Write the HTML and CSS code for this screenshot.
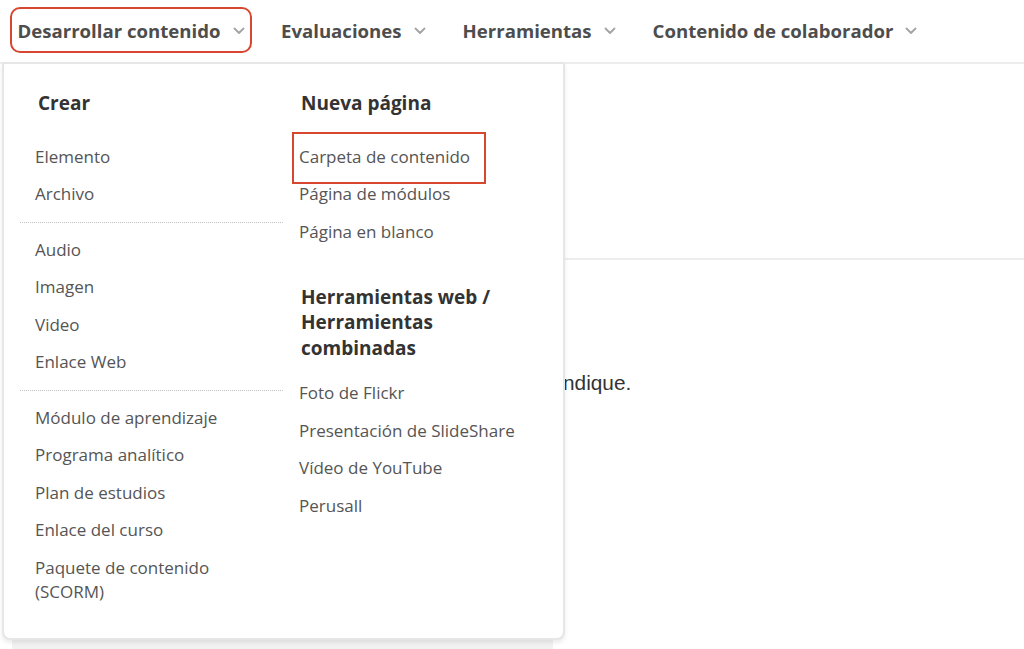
FILE: index.html
```html
<!DOCTYPE html>
<html lang="es">
<head>
  <meta charset="UTF-8"/>
  <meta name="viewport" content="width=device-width, initial-scale=1"/>
  <title>Desarrollar contenido</title>
  <link rel="stylesheet" href="styles.css">
</head>
<body>

  <!-- Top menu -->
  <header class="topnav">
    <div class="nav-item is-open">Desarrollar contenido
      <svg class="chev" viewBox="0 0 12 8"><path d="M1.5 1.5l4.5 4.5 4.5-4.5"/></svg>
    </div>
    <div class="nav-item">Evaluaciones
      <svg class="chev" viewBox="0 0 12 8"><path d="M1.5 1.5l4.5 4.5 4.5-4.5"/></svg>
    </div>
    <div class="nav-item">Herramientas
      <svg class="chev" viewBox="0 0 12 8"><path d="M1.5 1.5l4.5 4.5 4.5-4.5"/></svg>
    </div>
    <div class="nav-item">Contenido de colaborador
      <svg class="chev" viewBox="0 0 12 8"><path d="M1.5 1.5l4.5 4.5 4.5-4.5"/></svg>
    </div>
  </header>

  <!-- Open dropdown -->
  <div class="dropdown">
    <div class="dd-col dd-create">
      <h3>Crear</h3>
      <ul>
        <li>Elemento</li>
        <li>Archivo</li>
      </ul>
      <hr class="dd-sep">
      <ul>
        <li>Audio</li>
        <li>Imagen</li>
        <li>Video</li>
        <li>Enlace Web</li>
      </ul>
      <hr class="dd-sep">
      <ul>
        <li>Módulo de aprendizaje</li>
        <li>Programa analítico</li>
        <li>Plan de estudios</li>
        <li>Enlace del curso</li>
        <li>Paquete de contenido (SCORM)</li>
      </ul>
    </div>
    <div class="dd-col dd-pages">
      <h3>Nueva página</h3>
      <ul>
        <li class="is-marked">Carpeta de contenido</li>
        <li>Página de módulos</li>
        <li>Página en blanco</li>
      </ul>
      <h3 class="dd-sub">Herramientas web / Herramientas combinadas</h3>
      <ul>
        <li>Foto de Flickr</li>
        <li>Presentación de SlideShare</li>
        <li>Vídeo de YouTube</li>
        <li>Perusall</li>
      </ul>
    </div>
  </div>

  <!-- Page behind the menu (mostly covered by the dropdown) -->
  <main class="page">
    <aside class="course-menu"></aside>
    <section class="content">
      <div class="content-head"></div>
      <p class="note">ndique.</p>
    </section>
  </main>

</body>
</html>
```

FILE: styles.css
```css
*, *::before, *::after { box-sizing: border-box; }
body {
  margin: 0;
  font-family: 'Open Sans', 'Noto Sans', sans-serif;
  background: #fff;
  color: #555;
  overflow: hidden;
}

/* Top menu */
.topnav {
  height: 64px;
  display: flex;
  align-items: center;
  gap: 21px;
  padding: 0 0 2px 10px;
  border-bottom: 2px solid #ededed;
}
.nav-item {
  display: flex; align-items: center;
  gap: 12px;
  height: 46px;
  padding: 0 6px;
  border: 2px solid transparent;
  border-radius: 10px;
  font-size: 18.6px; font-weight: 700;
  color: #4d4d4d;
  white-space: nowrap;
}
.nav-item.is-open { border: 2.5px solid #d7472f; padding: 0 5.5px; }
.chev {
  width: 12px; height: 8px;
  fill: none; stroke: #a3a3a3;
  stroke-width: 1.8; stroke-linecap: round; stroke-linejoin: round;
  margin-top: 2px;
}

/* Dropdown panel */
.dropdown {
  position: absolute;
  top: 62px; left: 2px;
  width: 563px;
  display: flex;
  padding: 27px 0 27px 16px;
  background: #fff;
  border: 2px solid #e6e6e6;
  border-radius: 2px 2px 8px 8px;
  box-shadow: 0 3px 4px rgba(0,0,0,0.08);
  z-index: 10;
}
.dd-col h3 {
  margin: 0 0 21.5px;
  padding-left: 18px;
  font-size: 19px; line-height: 25.5px;
  font-weight: 700; color: #333;
}
.dd-col ul { list-style: none; margin: 0; padding: 0; }
.dd-col li {
  position: relative;
  padding: 6.75px 14px 6.75px 15px;
  font-size: 17px; line-height: 24px;
  color: #555;
}
.dd-create { width: 263px; }
.dd-pages { width: 262px; margin-left: 1px; }
.dd-pages h3 { padding-left: 17px; }
.dd-pages .dd-sub { margin: 34px 0 13.5px; padding-right: 30px; }
.dd-sep {
  margin: 8.5px 0;
  border: 0;
  border-top: 1px dotted #c4c4c4;
}
.is-marked::after {
  content: "";
  position: absolute;
  left: 8px; top: -6.25px;
  width: 194px; height: 52px;
  border: 2.5px solid #d7472f;
}

/* Page behind */
.page {
  display: flex;
  gap: 12px;
  padding-left: 12px;
}
.course-menu {
  width: 541px;
  height: 600px;
  background: #f2f2f2;
}
.content { flex: 1; }
.content-head {
  height: 196px;
  border-bottom: 2px solid #ededed;
}
.note {
  margin: 111px 0 0 -2px;
  font-family: 'Liberation Sans', Arial, sans-serif;
  font-size: 20.8px; line-height: 24px;
  color: #333;
}
```
